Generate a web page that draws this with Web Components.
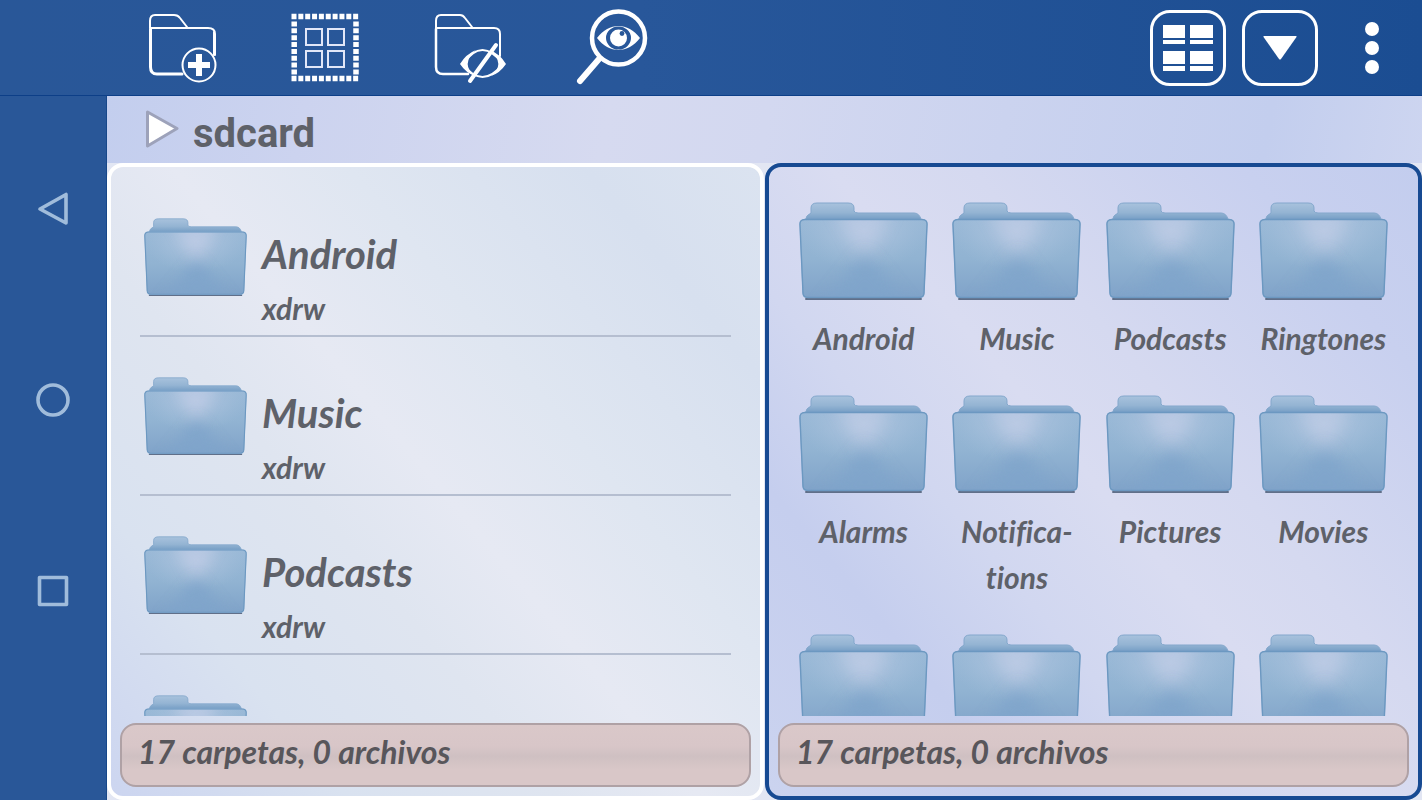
<!DOCTYPE html>
<html lang="es">
<head>
<meta charset="utf-8">
<meta name="viewport" content="width=device-width, initial-scale=1">
<title>sdcard</title>
<style>
    html, body {
        height: 100%;
        margin: 0;
    }

    body {
        background: hsl(225, 50%, 91%);
        overflow: hidden;
    }
</style>
</head>
<body>
<file-manager>
    <system-nav slot="nav"></system-nav>
    <tool-bar slot="toolbar"></tool-bar>
    <path-bar slot="path">sdcard</path-bar>
    <file-pane slot="panes" status="17 carpetas, 0 archivos">
        <file-row name="Android" mode="xdrw"></file-row>
        <file-row name="Music" mode="xdrw"></file-row>
        <file-row name="Podcasts" mode="xdrw"></file-row>
        <file-row name="" mode=""></file-row>
    </file-pane>
    <file-pane slot="panes" view="grid" active status="17 carpetas, 0 archivos">
        <file-tile name="Android"></file-tile>
        <file-tile name="Music"></file-tile>
        <file-tile name="Podcasts"></file-tile>
        <file-tile name="Ringtones"></file-tile>
        <file-tile name="Alarms"></file-tile>
        <file-tile name="Notifica-tions"></file-tile>
        <file-tile name="Pictures"></file-tile>
        <file-tile name="Movies"></file-tile>
        <file-tile name=""></file-tile>
        <file-tile name=""></file-tile>
        <file-tile name=""></file-tile>
        <file-tile name=""></file-tile>
    </file-pane>
</file-manager>

<script>
class FileManager extends HTMLElement {

    constructor() {
        super();
        this.shadow = this.attachShadow({mode: 'open'});
        this.render();
    }

    render() {
        this.shadow.innerHTML =
        `
        <style>
            :host {
                background: linear-gradient(90deg, #295798, #28579a 45%, #1b4d92);
                color: #5e6169;
                display: flex;
                flex-direction: column;
                font-family: Lato, "Open Sans", sans-serif;
                font-variant-ligatures: none;
                height: 100vh;
            }

            .body {
                display: flex;
                flex: 1;
                min-height: 0;
            }

            main {
                background: #e2e6f3;
                display: flex;
                flex: 1;
                flex-direction: column;
                min-width: 0;
            }

            .panes {
                display: flex;
                flex: 1;
                gap: 1px;
                min-height: 0;
            }
        </style>
        <slot name="toolbar"></slot>
        <div class="body">
            <slot name="nav"></slot>
            <main>
                <slot name="path"></slot>
                <div class="panes"><slot name="panes"></slot></div>
            </main>
        </div>
        `;
    }
}

class SystemNav extends HTMLElement {

    constructor() {
        super();
        this.shadow = this.attachShadow({mode: 'open'});
        this.render();
    }

    render() {
        this.shadow.innerHTML =
        `
        <style>
            :host {
                background: #295798;
                border-right: 1px solid #174789;
                box-sizing: border-box;
                display: block;
                width: 107px;
            }

            nav {
                align-items: center;
                display: flex;
                flex-direction: column;
                gap: 155px;
                padding-top: 95px;
            }

            button {
                background: none;
                border: 0;
                cursor: pointer;
                height: 36px;
                padding: 0;
                width: 36px;
            }

            svg {
                display: block;
                fill: none;
                height: 36px;
                stroke: #a0bcdb;
                stroke-linejoin: round;
                stroke-width: 3.6;
                width: 36px;
            }
        </style>
        <nav>
            <button type="button" aria-label="Atrás"><svg viewBox="0 0 36 36"><path d="M31 3.500V32L5 18z" /></svg></button>
            <button type="button" aria-label="Inicio"><svg viewBox="0 0 36 36"><circle cx="18" cy="18" r="15" /></svg></button>
            <button type="button" aria-label="Recientes"><svg viewBox="0 0 36 36"><rect x="4.500" y="4.500" width="27" height="27" /></svg></button>
        </nav>
        `;
    }
}

class ToolBar extends HTMLElement {

    constructor() {
        super();
        this.shadow = this.attachShadow({mode: 'open'});
        this.render();
    }

    render() {
        this.shadow.innerHTML =
        `
        <style>
            :host {
                align-items: center;
                border-bottom: 1px solid #0d3f88;
                display: flex;
                gap: 16px;
                height: 95px;
                padding: 0 12px 0 110px;
            }

            .actions {
                display: flex;
                flex: 1;
            }

            button {
                align-items: center;
                background: none;
                border: 0;
                box-sizing: border-box;
                cursor: pointer;
                display: flex;
                height: 76px;
                justify-content: center;
                padding: 0;
                width: 76px;
            }

            .actions button {
                width: 143px;
            }

            .boxed {
                border: 3px solid #fff;
                border-radius: 20px;
            }

            svg {
                display: block;
                fill: none;
                flex: none;
                overflow: visible;
                stroke: #fff;
                stroke-linecap: round;
                stroke-linejoin: round;
                stroke-width: 2;
            }

            .solid {
                fill: #fff;
                stroke: none;
            }
        </style>
        <div class="actions">
            <button type="button" aria-label="Nueva carpeta">
                <svg width="76" height="76" viewBox="0 0 76 76">
                    <path d="M6 18V11Q6 5 11 5H30Q34 5 36 8L43 17M6 18H64Q71 18 71 24V45" />
                    <path stroke-width="3" d="M6.500 19V57Q6.500 64 13 64H38" />
                    <path d="M70 22V45" />
                    <circle cx="55" cy="55" r="16.500" />
                    <path class="solid" d="M52 44h6v8h8v6h-8v8h-6v-8h-8v-6h8z" />
                </svg>
            </button>
            <button type="button" aria-label="Seleccionar">
                <svg width="76" height="76" viewBox="0 0 76 76">
                    <g stroke-width="5.500" stroke-linecap="butt" stroke-dasharray="5 1.850">
                        <path d="M4.500 6.500H72M4.500 68.500H72" />
                        <path d="M7.200 11.500V66M69 11.500V66" />
                    </g>
                    <g stroke="#e2e7f8" stroke-linejoin="miter">
                        <rect x="19" y="19" width="16" height="16" /><rect x="41" y="19" width="16" height="16" />
                        <rect x="19" y="41" width="16" height="16" /><rect x="41" y="41" width="16" height="16" />
                    </g>
                </svg>
            </button>
            <button type="button" aria-label="Ocultar">
                <svg width="76" height="76" viewBox="0 0 76 76">
                    <path d="M6 18V11Q6 5 11 5H30Q33 5 35 8L42 17M6 18H64Q70 18 70 24V46" />
                    <path stroke-width="2.500" d="M6 19V57Q6 64 13 64H38" />
                    <path d="M33 54Q52 26 73 54Q52 80 33 54z" />
                    <path class="solid" d="M30 54Q36 44 46 40Q30 54 45 66Q36 63 30 54zM76 54Q70 44 60 40Q76 54 61 66Q70 63 76 54z" />
                    <path stroke-width="4" d="M40 71L66 35" />
                </svg>
            </button>
            <button type="button" aria-label="Buscar">
                <svg width="76" height="76" viewBox="0 0 76 76">
                    <circle cx="45.500" cy="28" r="26.500" stroke-width="4.500" />
                    <path stroke-width="6" d="M26 49L7 71" />
                    <path class="solid" fill-rule="evenodd" d="M24 28C36 12 55 12 67 28C55 44 36 44 24 28zM33 28a12.500 11.500 0 1 0 25 0a12.500 11.500 0 1 0-25 0z" />
                    <circle class="solid" cx="45.500" cy="28" r="8.500" />
                    <circle cx="49" cy="23.500" r="2.400" fill="#285798" stroke="none" />
                </svg>
            </button>
        </div>
        <button type="button" class="boxed" aria-label="Vista">
            <svg class="solid" width="50" height="46" viewBox="0 0 50 46">
                <path d="M0 0H22V13H0zM27 0H50V13H27zM0 15H22V19H0zM27 15H50V19H27zM0 26H22V39H0zM27 26H50V39H27zM0 41H22V46H0zM27 41H50V46H27z" />
            </svg>
        </button>
        <button type="button" class="boxed" aria-label="Ordenar">
            <svg class="solid" width="34" height="24" viewBox="0 0 34 24"><path d="M1 0H33Q34 0 33.500 1L18 23Q17 24 16 23L.5 1Q0 0 1 0z" /></svg>
        </button>
        <button type="button" aria-label="Más opciones">
            <svg class="solid" width="14" height="52" viewBox="0 0 14 52">
                <circle cx="7" cy="7" r="7" /><circle cx="7" cy="26" r="7" /><circle cx="7" cy="45" r="7" />
            </svg>
        </button>
        `;
    }
}

class PathBar extends HTMLElement {

    constructor() {
        super();
        this.shadow = this.attachShadow({mode: 'open'});
        this.render();
    }

    render() {
        this.shadow.innerHTML =
        `
        <style>
            :host {
                align-items: center;
                background: linear-gradient(100deg, #c3ceee, #ccd3ef 15%, #d6daf0 38%, #d3d8f0 50%, #cbd3ef 68%, #c3ceee 88%, #cdd5f0);
                display: flex;
                font-family: Roboto, sans-serif;
                font-size: 40px;
                font-weight: 700;
                gap: 14px;
                height: 67px;
                padding-left: 38px;
            }

            svg {
                margin-bottom: 2px;
            }

            h1 {
                font-size: inherit;
                line-height: 48px;
                margin: 8px 0 0;
            }
        </style>
        <svg width="34" height="38" viewBox="0 0 34 38"><path d="M2.500 2L32 18.500L2.500 36z" fill="#fff" stroke="#9da2ba" stroke-width="3" stroke-linejoin="round" /></svg>
        <h1><slot></slot></h1>
        `;
    }
}

class FilePane extends HTMLElement {

    constructor() {
        super();
        this.shadow = this.attachShadow({mode: 'open'});
        this.render();
    }

    render() {
        this.shadow.innerHTML =
        `
        <style>
            :host {
                background: linear-gradient(50deg, #ccd5f0, #d9e2f0 20%, #dfe5f0 38%, #e6e9f3 50%, #dfe6f1 65%, #d7e0ef 85%, #dbe3f0);
                border: 4px solid #fff;
                border-radius: 16px;
                box-sizing: border-box;
                display: flex;
                flex: 1;
                flex-direction: column;
                min-width: 0;
            }

            :host([active]) {
                background: linear-gradient(50deg, #cbd3ef, #c5ceee 22%, #d1d7f0 36%, #d9dcf1 50%, #d5d9f0 62%, #c8d0ef 85%, #c3cdee);
                border-color: #174a92;
            }

            .items {
                flex: 1;
                min-height: 0;
                overflow: hidden;
                padding: 11px 29px 0;
            }

            :host([view="grid"]) .items {
                align-content: start;
                display: grid;
                grid-template-columns: repeat(4, 1fr);
                padding: 35px 18px 0;
                row-gap: 34px;
            }

            footer {
                background: linear-gradient(#dac8c9, #d8c6c8 35%, #cfc0c2 52%, #d9c7c8 75%);
                border: 2px solid #afa1a5;
                border-radius: 16px;
                box-sizing: border-box;
                color: #58565b;
                font-size: 32px;
                font-style: italic;
                font-weight: 700;
                height: 64px;
                line-height: 54px;
                margin: 7px 9px 9px;
                overflow: hidden;
                padding: 0 16px;
                white-space: nowrap;
            }
        </style>
        <div class="items"><slot></slot></div>
        <footer>${this.getAttribute('status')}</footer>
        `;
    }
}

class FolderIcon extends HTMLElement {

    constructor() {
        super();
        this.shadow = this.attachShadow({mode: 'open'});
        this.render();
    }

    render() {
        this.shadow.innerHTML =
        `
        <style>
            :host {
                display: block;
            }

            svg {
                display: block;
                height: auto;
                width: 100%;
            }
        </style>
        <svg viewBox="0 0 129 98" aria-hidden="true">
            <defs>
                <linearGradient id="tab" x2="0" y2="1">
                    <stop offset="0" stop-color="#a8c2dd" />
                    <stop offset=".5" stop-color="#94b4d3" />
                    <stop offset="1" stop-color="#6b96c0" />
                </linearGradient>
                <linearGradient id="front" x2="0" y2="1">
                    <stop offset="0" stop-color="#9ab9d7" />
                    <stop offset=".5" stop-color="#91b3d2" />
                    <stop offset="1" stop-color="#80a3c9" />
                </linearGradient>
                <radialGradient id="shine" cx=".5" cy=".15" r=".5">
                    <stop offset="0" stop-color="#b9cae4" stop-opacity=".9" />
                    <stop offset="1" stop-color="#a4bfda" stop-opacity="0" />
                </radialGradient>
                <filter id="soft" x="-50%" y="-50%" width="200%" height="200%"><feGaussianBlur stdDeviation="8" /></filter>
                <clipPath id="face"><path d="M6 18H123Q128 18 127 24L124 91Q124 95 119 95H9Q5 95 4 91L1 24Q1 18 6 18z" /></clipPath>
            </defs>
            <path d="M6 19Q7 13 12 11V6Q12 1 18 1H49Q55 1 55 6V9Q56 11 59 11H115Q120 11 122 17V20z" fill="url(#tab)" stroke="#83a7cc" />
            <path d="M7 97H122" stroke="#606f89" stroke-width="2" stroke-linecap="round" />
            <path d="M6 17H123Q129 17 128.500 23L125.500 91Q125 96 120 96H9Q4 96 3.500 91L.5 23Q0 17 6 17z" fill="url(#front)" />
            <g clip-path="url(#face)">
                <path d="M0 17H129V96H0z" fill="url(#shine)" />
                <path d="M66 62L34 0H94z" fill="#bccae4" opacity=".7" filter="url(#soft)" />
                <path d="M66 50L20 108H112z" fill="#7fa4cb" opacity=".8" filter="url(#soft)" />
            </g>
            <path d="M6 17.500H123Q128.500 17.500 128 23L125 91Q125 95.500 120 95.500H9Q4 95.500 4 91L1 23Q.5 17.500 6 17.500z" fill="none" stroke="#6c98c1" stroke-width="1.400" />
        </svg>
        `;
    }
}

class FileRow extends HTMLElement {

    constructor() {
        super();
        this.shadow = this.attachShadow({mode: 'open'});
        this.render();
    }

    render() {
        this.shadow.innerHTML =
        `
        <style>
            :host {
                display: block;
            }

            a {
                border-bottom: 2px solid #b5bed0;
                box-sizing: border-box;
                color: inherit;
                display: flex;
                font-style: italic;
                font-weight: 700;
                gap: 15px;
                height: 159px;
                padding: 0 4px;
                text-decoration: none;
            }

            folder-icon {
                flex: none;
                margin-top: 40px;
                width: 103px;
            }

            .text {
                padding-top: 52px;
            }

            .name {
                font-size: 40px;
                line-height: 48px;
            }

            .mode {
                font-size: 30px;
                line-height: 60px;
            }
        </style>
        <a href="#">
            <folder-icon></folder-icon>
            <div class="text">
                <div class="name">${this.getAttribute('name')}</div>
                <div class="mode">${this.getAttribute('mode')}</div>
            </div>
        </a>
        `;
    }
}

class FileTile extends HTMLElement {

    constructor() {
        super();
        this.shadow = this.attachShadow({mode: 'open'});
        this.render();
    }

    render() {
        this.shadow.innerHTML =
        `
        <style>
            :host {
                display: block;
                min-width: 0;
            }

            a {
                align-items: center;
                color: inherit;
                display: flex;
                flex-direction: column;
                font-size: 30px;
                font-style: italic;
                font-weight: 700;
                gap: 15px;
                line-height: 46px;
                padding: 0 8px;
                text-align: center;
                text-decoration: none;
            }

            folder-icon {
                width: 129px;
            }
        </style>
        <a href="#">
            <folder-icon></folder-icon>
            <span>${this.getAttribute('name')}</span>
        </a>
        `;
    }
}

customElements.define('folder-icon', FolderIcon);
customElements.define('file-row', FileRow);
customElements.define('file-tile', FileTile);
customElements.define('file-pane', FilePane);
customElements.define('path-bar', PathBar);
customElements.define('tool-bar', ToolBar);
customElements.define('system-nav', SystemNav);
customElements.define('file-manager', FileManager);
</script>
</body>
</html>
